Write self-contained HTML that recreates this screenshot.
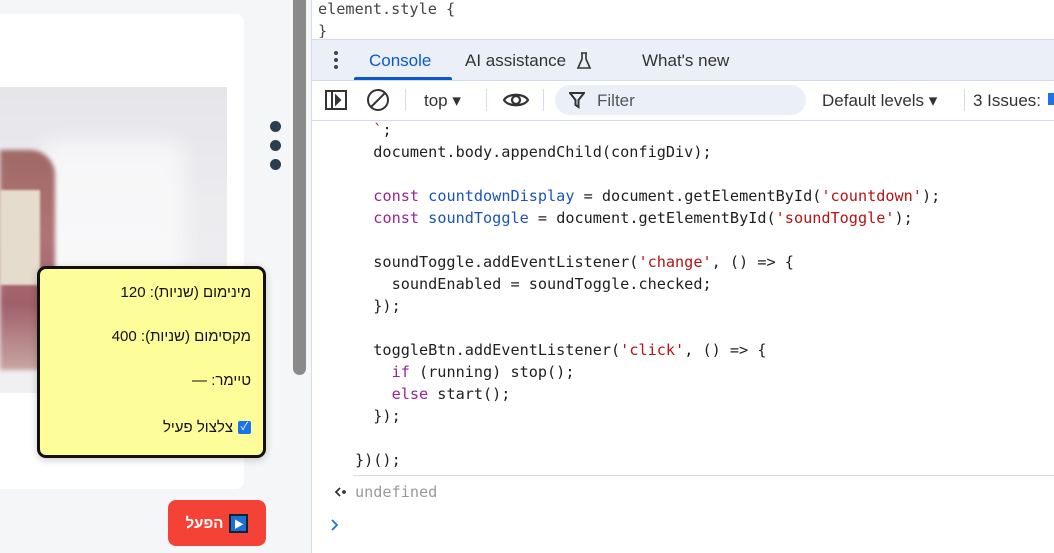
<!DOCTYPE html>
<html><head><meta charset="utf-8"><style>
*{margin:0;padding:0;box-sizing:border-box}
body{width:1054px;height:553px;overflow:hidden;background:#fff;position:relative;font-family:"Liberation Sans","Noto Sans CJK SC",sans-serif}
.abs{position:absolute}
.code{font-family:"DejaVu Sans Mono","Liberation Mono",monospace;font-size:15.2px;color:#1f1f1f;white-space:pre;position:absolute;left:355px;letter-spacing:0px}
.k{color:#9b2393}.v{color:#1a55b6}.s{color:#b31412}
</style></head><body>
<div class="abs" style="left:0;top:0;width:290px;height:553px;background:#f5f6f8"></div>
<div class="abs" style="left:0;top:14px;width:244px;height:475px;background:#fff;border-radius:0 8px 8px 0"></div>
<div class="abs" style="left:0;top:87px;width:227px;height:306px;background:linear-gradient(180deg,#e6e5ea,#ececef 40%,#f0eff2)"></div>
<div class="abs" style="left:40px;top:140px;width:145px;height:150px;background:rgba(255,255,255,.6);filter:blur(10px);border-radius:20px"></div>
<div class="abs" style="left:0;top:150px;width:55px;height:220px;background:linear-gradient(180deg,#a06a66,#b07478 40%,#a0606a 70%,#c8a6a2);border-radius:0 25px 20px 0;filter:blur(2px)"></div>
<div class="abs" style="left:0;top:190px;width:40px;height:95px;background:#e6dccd;filter:blur(1px)"></div>
<div class="abs" style="left:270px;top:121px;width:11px;height:11px;border-radius:50%;background:#2b3e4d"></div>
<div class="abs" style="left:270px;top:140px;width:11px;height:11px;border-radius:50%;background:#2b3e4d"></div>
<div class="abs" style="left:270px;top:159px;width:11px;height:11px;border-radius:50%;background:#2b3e4d"></div>
<div class="abs" style="left:37px;top:266px;width:229px;height:192px;background:#fdfd9a;border:3px solid #111;border-radius:9px;box-shadow:0 2px 8px rgba(0,0,0,.2);direction:rtl;font-size:15px;color:#111">
 <div class="abs" style="right:12px;top:15px">מינימום (שניות): 120</div>
 <div class="abs" style="right:12px;top:59px">מקסימום (שניות): 400</div>
 <div class="abs" style="right:12px;top:103px">טיימר: —</div>
 <div class="abs" style="right:12px;top:150px;display:flex;align-items:center;gap:5px"><span style="width:13px;height:13px;background:#1a73e8;border-radius:2px;color:#fff;font-size:11px;line-height:13px;text-align:center">✓</span>צלצול פעיל</div>
</div>
<div class="abs" style="left:168px;top:500px;width:98px;height:46px;background:#f44236;border-radius:8px;color:#fff;font-size:15px;font-weight:bold;display:flex;align-items:center;justify-content:center;gap:6px">
 <span>הפעל</span><span style="width:19px;height:19px;background:#1d6fd8;border:2px solid #123;display:flex;align-items:center;justify-content:center;font-size:10px">▶</span></div>
<div class="abs" style="left:290px;top:0;width:21px;height:553px;background:#f5f6f8"></div>
<div class="abs" style="left:293px;top:0;width:13px;height:375px;background:#8a8a8a;border-radius:0 0 7px 7px"></div>
<div class="abs" style="left:311px;top:0;width:1px;height:553px;background:#d3dcef"></div>
<div class="abs" style="left:318px;top:0;font-family:'DejaVu Sans Mono',monospace;font-size:15.2px;color:#444">element.style {</div>
<div class="abs" style="left:318px;top:22px;font-family:'DejaVu Sans Mono',monospace;font-size:15.2px;color:#444;height:16px;overflow:hidden">}</div>
<div class="abs" style="left:312px;top:39px;width:742px;height:42px;background:#ebf0f8;border-top:1px solid #d3dcef;border-bottom:1px solid #d3dcef"></div>
<div class="abs" style="left:334px;top:51px;width:4px;height:4px;border-radius:50%;background:#444;box-shadow:0 7px 0 #444,0 14px 0 #444"></div>
<div class="abs" style="left:369px;top:51px;font-size:17px;color:#0b57d0">Console</div>
<div class="abs" style="left:354px;top:77px;width:98px;height:3px;background:#0b57d0;border-radius:2px 2px 0 0"></div>
<div class="abs" style="left:465px;top:51px;font-size:17px;color:#333">AI assistance</div>
<svg class="abs" style="left:576px;top:52px" width="16" height="18" viewBox="0 0 16 18" fill="none" stroke="#333" stroke-width="1.6"><path d="M5 1h6M6 1v6L2 16h12L10 7V1"/></svg>
<div class="abs" style="left:642px;top:51px;font-size:17px;color:#333">What's new</div>
<div class="abs" style="left:312px;top:81px;width:742px;height:40px;background:#fff;border-bottom:1px solid #d3dcef"></div>
<svg class="abs" style="left:324px;top:88px" width="24" height="24" viewBox="0 0 24 24" fill="none" stroke="#333" stroke-width="2"><rect x="2" y="3" width="20" height="18"/><line x1="8" y1="3" x2="8" y2="21"/><path d="M12 8l4 4-4 4z" fill="#333"/></svg>
<svg class="abs" style="left:366px;top:88px" width="24" height="24" viewBox="0 0 24 24" fill="none" stroke="#333" stroke-width="2"><circle cx="12" cy="12" r="10"/><line x1="5" y1="19" x2="19" y2="5"/></svg>
<div class="abs" style="left:405px;top:89px;width:1px;height:22px;background:#d3dcef"></div>
<div class="abs" style="left:424px;top:91px;font-size:17px;color:#333">top ▾</div>
<div class="abs" style="left:486px;top:89px;width:1px;height:22px;background:#d3dcef"></div>
<svg class="abs" style="left:502px;top:88px" width="28" height="24" viewBox="0 0 28 24" fill="none" stroke="#333" stroke-width="2.2"><path d="M2 12C6 5 22 5 26 12 22 19 6 19 2 12z"/><circle cx="14" cy="12" r="4"/></svg>
<div class="abs" style="left:543px;top:89px;width:1px;height:22px;background:#d3dcef"></div>
<div class="abs" style="left:555px;top:85px;width:251px;height:30px;background:#ebf0f8;border-radius:15px"></div>
<svg class="abs" style="left:569px;top:91px" width="16" height="18" viewBox="0 0 16 18" fill="none" stroke="#333" stroke-width="2"><path d="M1 2h14L9.5 9v7l-3-2V9z"/></svg>
<div class="abs" style="left:597px;top:91px;font-size:17px;color:#555">Filter</div>
<div class="abs" style="left:822px;top:91px;font-size:17px;color:#333">Default levels ▾</div>
<div class="abs" style="left:964px;top:89px;width:1px;height:22px;background:#d3dcef"></div>
<div class="abs" style="left:973px;top:91px;font-size:17px;color:#333">3 Issues:</div>
<div class="abs" style="left:1048px;top:93px;width:6px;height:12px;background:#1a73e8"></div>
<div class="code" style="top:121px;height:20px;overflow:hidden"><span class="s">  `</span>;</div>
<div class="code" style="top:143px">  document.body.appendChild(configDiv);</div>
<div class="code" style="top:187px">  <span class="k">const</span> <span class="v">countdownDisplay</span> = document.getElementById(<span class="s">'countdown'</span>);</div>
<div class="code" style="top:209px">  <span class="k">const</span> <span class="v">soundToggle</span> = document.getElementById(<span class="s">'soundToggle'</span>);</div>
<div class="code" style="top:253px">  soundToggle.addEventListener(<span class="s">'change'</span>, () => {</div>
<div class="code" style="top:275px">    soundEnabled = soundToggle.checked;</div>
<div class="code" style="top:297px">  });</div>
<div class="code" style="top:341px">  toggleBtn.addEventListener(<span class="s">'click'</span>, () => {</div>
<div class="code" style="top:363px">    <span class="k">if</span> (running) stop();</div>
<div class="code" style="top:385px">    <span class="k">else</span> start();</div>
<div class="code" style="top:407px">  });</div>
<div class="code" style="top:451px">})();</div>
<div class="abs" style="left:353px;top:475px;width:701px;height:1px;background:#d3dcef"></div>
<svg class="abs" style="left:334px;top:486px" width="14" height="12" viewBox="0 0 14 12" fill="none" stroke="#333" stroke-width="1.8"><path d="M6 2L2 6l4 4"/><circle cx="10" cy="6" r="1" fill="#333"/></svg>
<div class="code" style="top:483px;color:#999">undefined</div>
<svg class="abs" style="left:330px;top:519px" width="10" height="12" viewBox="0 0 10 12" fill="none" stroke="#1a73e8" stroke-width="1.8"><path d="M2 1l5 5-5 5"/></svg>
</body></html>
